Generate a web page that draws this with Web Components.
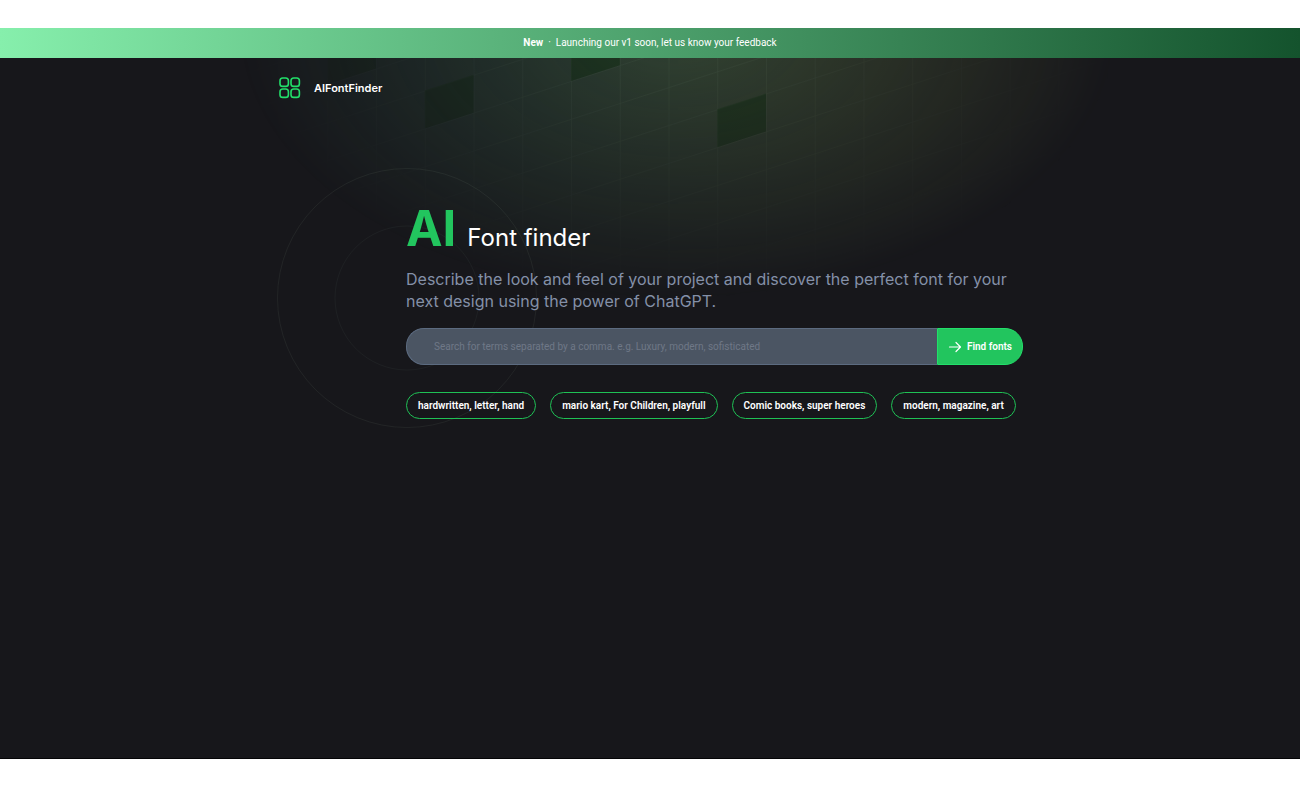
<!DOCTYPE html>
<html lang="en">
<head>
<meta charset="utf-8">
<meta name="viewport" content="width=device-width, initial-scale=1">
<title>AIFontFinder</title>
<style>
body { margin: 0; background: #fff; font-family: Inter, "Liberation Sans", sans-serif; --small-font: Roboto, Inter, sans-serif; }
</style>
</head>
<body>
<font-finder-app></font-finder-app>

<template id="app-t">
<style>
:host { display: flex; flex-direction: column; box-sizing: border-box; min-height: 100vh; padding: 28px 0 29px; }
.page { position: relative; isolation: isolate; overflow: hidden; flex: 1; display: flex; flex-direction: column; background: #17171b; border-bottom: 1px solid #050507; color: #fff; }
grid-glow { position: absolute; z-index: -1; top: 0; left: 50%; margin-left: -412px; }
.wrap { width: 100%; max-width: 746px; margin: 0 auto; box-sizing: border-box; }
main { padding-left: 129px; margin-top: 96px; position: relative; }
ring-pair { position: absolute; z-index: -1; left: 0; top: -31px; }
h1 { display: flex; align-items: baseline; gap: 11px; margin: 0; font-size: 24px; line-height: 60px; font-weight: 400; }
h1 strong { font-size: 49px; font-weight: 700; color: #22c55e; }
p { margin: 0; font-size: 16px; line-height: 22px; color: #8490a8; }
search-bar { margin-top: 16px; }
.tags { display: flex; flex-wrap: wrap; gap: 14px; margin-top: 27px; }
</style>
<div class="page">
  <grid-glow></grid-glow>
  <promo-banner><strong slot="label">New</strong>Launching our v1 soon, let us know your feedback</promo-banner>
  <div class="wrap"><site-brand>AIFontFinder</site-brand>
  <main>
    <ring-pair></ring-pair>
    <h1><strong>AI</strong> <span>Font finder</span></h1>
    <p>Describe the look and feel of your project and discover the perfect font for your next design using the power of ChatGPT.</p>
    <search-bar></search-bar>
    <div class="tags">
      <tag-pill>hardwritten, letter, hand</tag-pill>
      <tag-pill>mario kart, For Children, playfull</tag-pill>
      <tag-pill>Comic books, super heroes</tag-pill>
      <tag-pill>modern, magazine, art</tag-pill>
    </div>
  </main></div>
</div>
</template>

<template id="banner-t">
<style>
:host { display: flex; justify-content: center; align-items: center; gap: 5px; height: 30px; font-family: var(--small-font); font-size: 10px; line-height: 16px; color: #fff; background: linear-gradient(90deg, #86efac, #14532d); }
::slotted(strong) { font-weight: 700; }
</style>
<slot name="label"></slot><span aria-hidden="true">·</span><span><slot></slot></span>
</template>

<template id="brand-t">
<style>
:host { display: block; padding: 19px 0 0 2px; }
a { display: inline-flex; align-items: center; gap: 13px; color: #fff; text-decoration: none; font-size: 11px; line-height: 22px; font-weight: 600; }
svg { width: 22px; height: 22px; }
</style>
<a href="#"><svg viewBox="0 0 22 22" fill="none" stroke="#22e06a" stroke-width="1.6" aria-hidden="true"><rect x="1" y="1" width="8.4" height="8.4" rx="2.7"/><rect x="12" y="1" width="8.4" height="8.4" rx="2.7"/><rect x="1" y="12" width="8.4" height="8.4" rx="2.7"/><rect x="12" y="12" width="8.4" height="8.4" rx="2.7"/></svg><slot></slot></a>
</template>

<template id="search-t">
<style>
:host { display: block; }
form { display: flex; height: 37px; }
input, button { font-family: var(--small-font); font-size: 10px; box-sizing: border-box; margin: 0; }
input { flex: 1; min-width: 0; padding: 0 27px; border: 1px solid #5c6b80; border-right: 0; border-radius: 18px 0 0 18px; background: #4b5563; color: #fff; outline: none; }
input::placeholder { color: #6f7887; opacity: 1; }
button { display: flex; align-items: center; gap: 5px; padding: 0 10px; border: 1px solid #22e06a; border-radius: 0 18px 18px 0; background: #22c55e; color: #fff; font-weight: 600; white-space: nowrap; cursor: pointer; }
svg { width: 14px; height: 14px; }
</style>
<form><input type="text" aria-label="Search terms" placeholder="Search for terms separated by a comma. e.g. Luxury, modern, sofisticated"><button type="button"><svg viewBox="0 0 14 14" fill="none" stroke="#fff" stroke-width="1.2" stroke-linecap="round" stroke-linejoin="round" aria-hidden="true"><path d="M1.5 7h11M8 2.5L12.5 7 8 11.5"/></svg>Find fonts</button></form>
</template>

<template id="pill-t">
<style>
:host { display: block; }
button { display: block; height: 27px; padding: 0 11px; border: 1px solid #1fc155; border-radius: 14px; background: none; color: #fff; font-family: var(--small-font); font-size: 10px; font-weight: 600; line-height: 16px; white-space: nowrap; cursor: pointer; }
</style>
<button type="button"><slot></slot></button>
</template>

<template id="glow-t">
<style>
:host { display: block; width: 880px; height: 271px; pointer-events: none; }
.fill { height: 100%; position: relative; overflow: hidden; background: linear-gradient(90deg, rgb(54 160 130 / .26), rgb(210 240 110 / .24)); mask-image: radial-gradient(farthest-side at top, #fff, transparent); }
svg { display: block; width: 100%; height: 100%; }
</style>
<div class="fill"><svg viewBox="0 0 1300 400" aria-hidden="true">
<defs><pattern id="cells" width="72" height="56" patternUnits="userSpaceOnUse" x="-12" y="4"><path d="M.5 56V.5H72" fill="none" stroke="#b8e0b8" stroke-opacity=".09"/></pattern></defs>
<g transform="translate(0 10) skewY(-18)"><rect y="-60" width="1300" height="1000" fill="url(#cells)"/>
<g fill="#0a2e0c" fill-opacity=".45"><rect x="132" y="60" width="72" height="56"/><rect x="276" y="172" width="72" height="56"/><rect x="492" y="172" width="72" height="56"/><rect x="708" y="340" width="72" height="56"/></g></g>
</svg></div>
</template>

<template id="rings-t">
<style>
:host { display: block; width: 260px; height: 260px; pointer-events: none; }
svg { display: block; }
</style>
<svg width="260" height="260" fill="none" stroke="#86a08a" stroke-opacity=".1" aria-hidden="true"><circle cx="130" cy="130" r="129.5"/><circle cx="130" cy="130" r="72" stroke-opacity=".07"/></svg>
</template>

<script>
const define = (name, id) => customElements.define(name, class extends HTMLElement {
  constructor() {
    super();
    this.attachShadow({ mode: "open" }).append(document.getElementById(id).content.cloneNode(true));
  }
});
define("promo-banner", "banner-t");
define("site-brand", "brand-t");
define("search-bar", "search-t");
define("tag-pill", "pill-t");
define("grid-glow", "glow-t");
define("ring-pair", "rings-t");
define("font-finder-app", "app-t");
</script>
</body>
</html>
